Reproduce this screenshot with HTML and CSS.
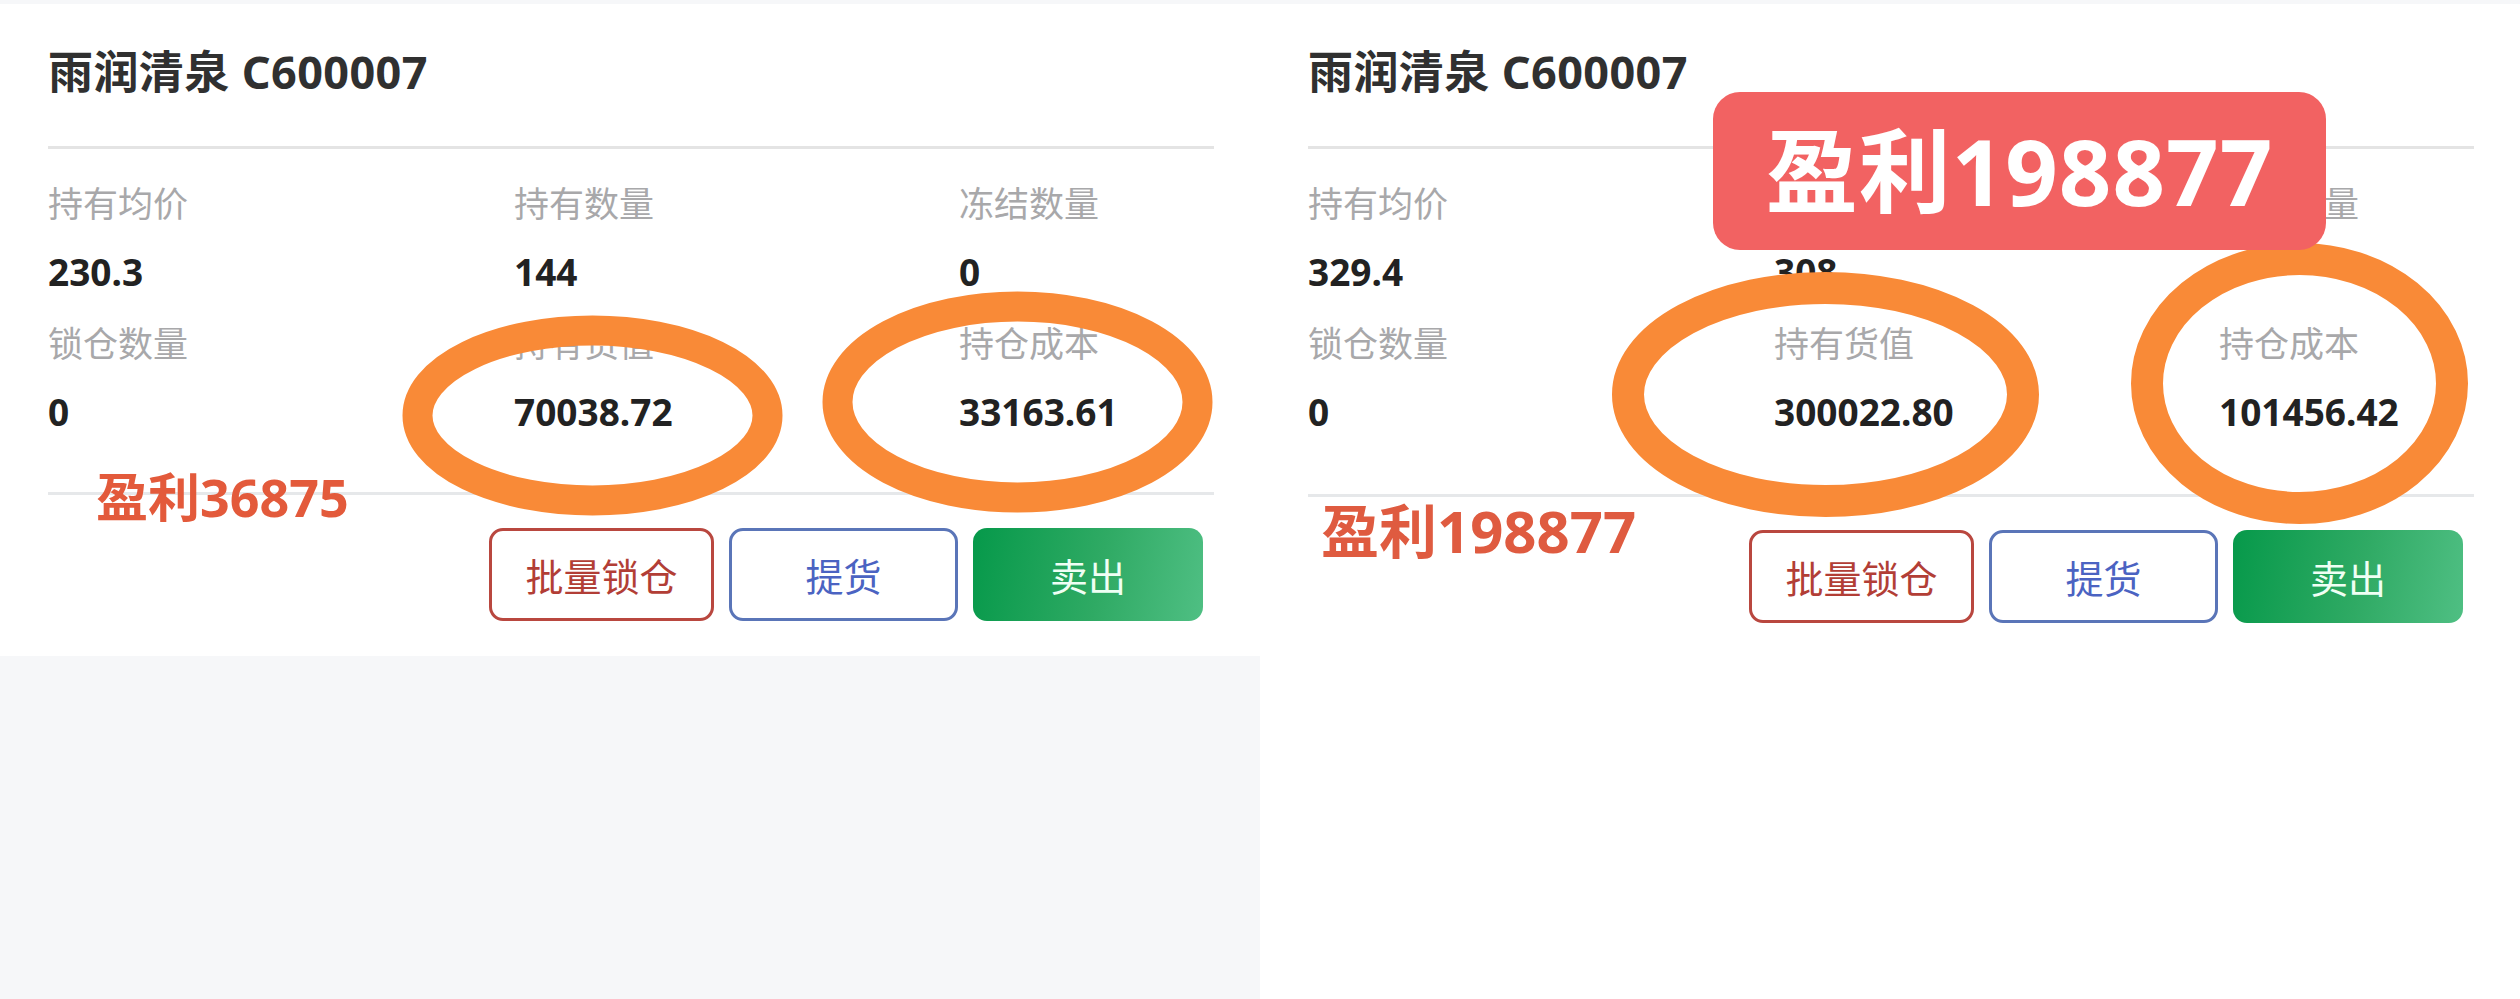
FILE: index.html
```html
<!DOCTYPE html>
<html lang="zh-CN">
<head>
    <meta charset="UTF-8">
    <meta name="viewport" content="width=device-width, initial-scale=1.0">
    <title>持仓 - 雨润清泉</title>
    <link rel="stylesheet" href="styles.css">
</head>
<body>
    <div class="page">
        <!-- 左侧截图 -->
        <section class="panel">
            <div class="card">
                <h2 class="card-title">雨润清泉 C600007</h2>
                <div class="stats">
                    <div class="stat">
                        <span class="stat-label">持有均价</span>
                        <span class="stat-value">230.3</span>
                    </div>
                    <div class="stat">
                        <span class="stat-label">持有数量</span>
                        <span class="stat-value">144</span>
                    </div>
                    <div class="stat">
                        <span class="stat-label">冻结数量</span>
                        <span class="stat-value">0</span>
                    </div>
                    <div class="stat">
                        <span class="stat-label">锁仓数量</span>
                        <span class="stat-value">0</span>
                    </div>
                    <div class="stat">
                        <span class="stat-label">持有货值</span>
                        <span class="stat-value">70038.72</span>
                    </div>
                    <div class="stat">
                        <span class="stat-label">持仓成本</span>
                        <span class="stat-value">33163.61</span>
                    </div>
                </div>
                <div class="actions">
                    <button class="btn btn-lock">批量锁仓</button>
                    <button class="btn btn-pickup">提货</button>
                    <button class="btn btn-sell">卖出</button>
                </div>
            </div>

            <svg class="marks" viewBox="0 0 1260 999" width="1260" height="999">
                <ellipse cx="592.5" cy="415.5" rx="175" ry="85"></ellipse>
                <ellipse cx="1017.5" cy="402" rx="180" ry="95.5"></ellipse>
            </svg>
            <div class="profit profit-left">盈利36875</div>
        </section>

        <!-- 右侧截图 -->
        <section class="panel panel-right">
            <div class="card card-full">
                <h2 class="card-title">雨润清泉 C600007</h2>
                <div class="stats">
                    <div class="stat">
                        <span class="stat-label">持有均价</span>
                        <span class="stat-value">329.4</span>
                    </div>
                    <div class="stat">
                        <span class="stat-label">持有数量</span>
                        <span class="stat-value">308</span>
                    </div>
                    <div class="stat">
                        <span class="stat-label">冻结数量</span>
                        <span class="stat-value">0</span>
                    </div>
                    <div class="stat">
                        <span class="stat-label">锁仓数量</span>
                        <span class="stat-value">0</span>
                    </div>
                    <div class="stat">
                        <span class="stat-label">持有货值</span>
                        <span class="stat-value">300022.80</span>
                    </div>
                    <div class="stat">
                        <span class="stat-label">持仓成本</span>
                        <span class="stat-value">101456.42</span>
                    </div>
                </div>
                <div class="actions">
                    <button class="btn btn-lock">批量锁仓</button>
                    <button class="btn btn-pickup">提货</button>
                    <button class="btn btn-sell">卖出</button>
                </div>
            </div>

            <svg class="marks" viewBox="0 0 1260 999" width="1260" height="999">
                <ellipse cx="565.5" cy="394.5" rx="197.5" ry="106.5"></ellipse>
                <ellipse cx="1039.5" cy="383.5" rx="152.5" ry="124.5"></ellipse>
            </svg>
            <div class="profit profit-right">盈利198877</div>
            <div class="badge">盈利198877</div>
        </section>
    </div>
</body>
</html>
```

FILE: styles.css
```css
* { box-sizing: border-box; margin: 0; padding: 0; }
body {
    font-family: "Noto Sans", "Noto Sans CJK SC", sans-serif;
    background: #f6f7f9;
    color: #222;
    width: 2520px;
    height: 999px;
    overflow: hidden;
}
.page {
    display: flex;
    height: 999px;
}
.panel {
    position: relative;
    width: 1260px;
    flex: none;
    padding-top: 4px;
}
.card {
    background: #fff;
    padding: 0 46px 0 48px;
}
.card-full {
    min-height: 995px;
}
.card-title {
    height: 145px;
    padding-bottom: 8px;
    display: flex;
    align-items: center;
    font-size: 45px;
    font-weight: 700;
    line-height: 1;
    letter-spacing: 0.4px;
    color: #303030;
    border-bottom: 3px solid #e4e4e4;
}
.stats {
    display: grid;
    grid-template-columns: 466px 445px 1fr;
    row-gap: 34px;
    padding: 37px 0 60px;
    border-bottom: 3px solid #e6e8ea;
}
.panel-right .stats {
    padding-bottom: 62px;
}
.stat {
    display: flex;
    flex-direction: column;
}
.stat-label {
    font-size: 35px;
    line-height: 36px;
    color: #a8a8aa;
    margin-bottom: 30px;
}
.stat-value {
    font-size: 37px;
    line-height: 40px;
    font-weight: 700;
    color: #222;
}
.actions {
    display: flex;
    justify-content: flex-end;
    gap: 15px;
    padding: 33px 11px 35px 0;
}
.btn {
    width: 229px;
    height: 93px;
    border-radius: 14px;
    background: #fff;
    font-family: "Noto Sans CJK SC", sans-serif;
    font-size: 38px;
    font-weight: 400;
    cursor: pointer;
}
.btn-lock {
    width: 225px;
    border: 3px solid #b9473f;
    color: #b23e36;
}
.btn-pickup {
    border: 3px solid #5a75b8;
    color: #4b63c2;
}
.btn-sell {
    width: 230px;
    border: none;
    color: #effff4;
    background: linear-gradient(100deg, #06994a 0%, #2faa64 55%, #4fbf83 100%);
}

/* 标注 */
.marks {
    position: absolute;
    top: 0;
    left: 0;
    pointer-events: none;
}
.marks ellipse {
    fill: none;
    stroke: #f98a37;
    stroke-width: 30;
}
.panel-right .marks ellipse {
    stroke-width: 32;
}
.profit {
    position: absolute;
    font-weight: 700;
    line-height: 1;
    white-space: nowrap;
}
.profit-left {
    left: 96px;
    top: 471px;
    font-size: 52px;
    color: #e35a3b;
}
.profit-right {
    left: 61px;
    top: 502px;
    font-size: 58px;
    color: #df5b40;
}
.badge {
    position: absolute;
    left: 453px;
    top: 92px;
    width: 613px;
    height: 158px;
    display: flex;
    align-items: center;
    justify-content: center;
    background: #f26262;
    border-radius: 27px;
    color: #fff;
    font-size: 92px;
    font-weight: 700;
    line-height: 1;
    letter-spacing: 1px;
    white-space: nowrap;
}
```
